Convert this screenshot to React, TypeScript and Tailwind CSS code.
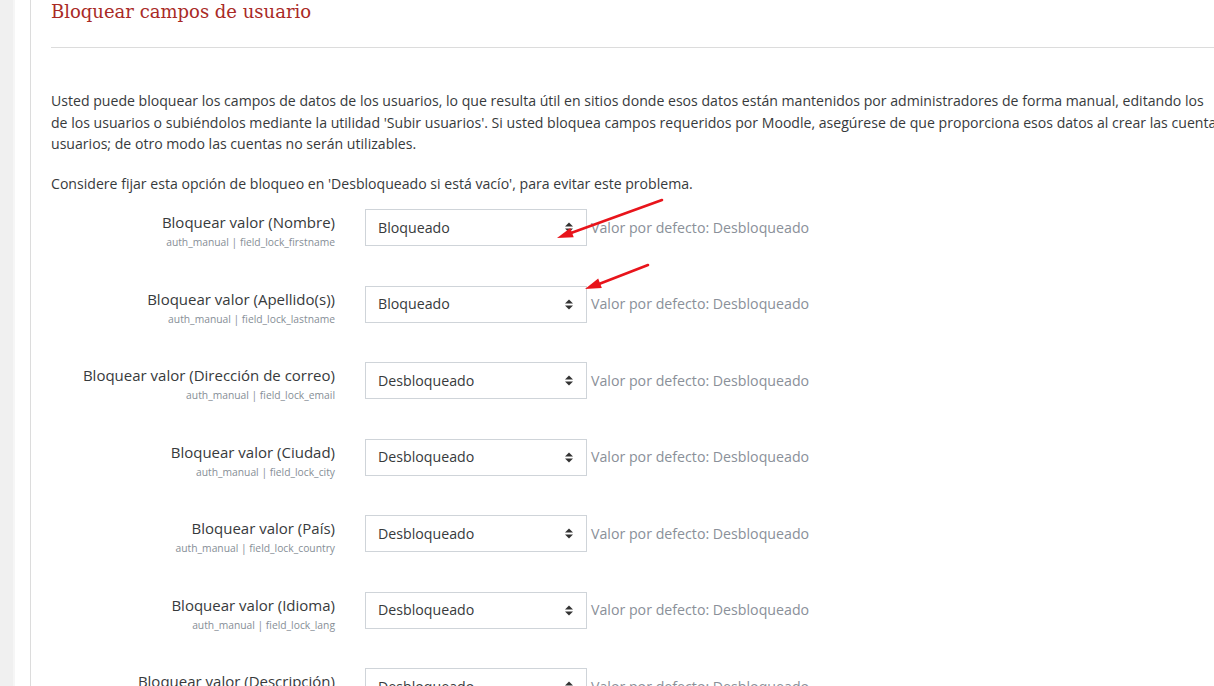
import React from "react";

const rows = [
  { label: "Bloquear valor (Nombre)", key: "auth_manual | field_lock_firstname", value: "Bloqueado" },
  { label: "Bloquear valor (Apellido(s))", key: "auth_manual | field_lock_lastname", value: "Bloqueado" },
  { label: "Bloquear valor (Dirección de correo)", key: "auth_manual | field_lock_email", value: "Desbloqueado" },
  { label: "Bloquear valor (Ciudad)", key: "auth_manual | field_lock_city", value: "Desbloqueado" },
  { label: "Bloquear valor (País)", key: "auth_manual | field_lock_country", value: "Desbloqueado" },
  { label: "Bloquear valor (Idioma)", key: "auth_manual | field_lock_lang", value: "Desbloqueado" },
  { label: "Bloquear valor (Descripción)", key: "auth_manual | field_lock_description", value: "Desbloqueado" },
];

function SelectArrows() {
  return (
    <svg width="8" height="11" viewBox="0 0 8 11" className="shrink-0">
      <path d="M0 4.5 L4 0.5 L8 4.5 Z" fill="#333" />
      <path d="M0 6.5 L4 10.5 L8 6.5 Z" fill="#333" />
    </svg>
  );
}

export default function App() {
  return (
    <div className="relative w-[1214px] h-[686px] overflow-hidden bg-white flex font-['Open_Sans',sans-serif] text-[#373a3c]">
      <div className="w-[13px] shrink-0 bg-[#f0f0f0]" />
      <div className="w-[2px] shrink-0 bg-[#f6f6f6]" />
      <div className="w-[15px] shrink-0 bg-white" />
      <div className="w-px shrink-0 bg-[#dcdcdc]" />
      <div className="flex-1 min-w-0 pl-[20px] overflow-hidden">
        <h2 className="font-['DejaVu_Serif',serif] text-[#a92a26] text-[18px] leading-[24px] whitespace-nowrap">
          Bloquear campos de usuario
        </h2>
        <div className="mt-[23px] h-px bg-[#dcdcdc]" />
        <div className="mt-[42px] text-[14.1px] leading-[21.5px] whitespace-nowrap">
          <div>Usted puede bloquear los campos de datos de los usuarios, lo que resulta útil en sitios donde esos datos están mantenidos por administradores de forma manual, editando los</div>
          <div>de los usuarios o subiéndolos mediante la utilidad 'Subir usuarios'. Si usted bloquea campos requeridos por Moodle, asegúrese de que proporciona esos datos al crear las cuentas de</div>
          <div>usuarios; de otro modo las cuentas no serán utilizables.</div>
        </div>
        <div className="mt-[18px] text-[14.1px] leading-[21.5px] whitespace-nowrap">
          Considere fijar esta opción de bloqueo en 'Desbloqueado si está vacío', para evitar este problema.
        </div>
        <div className="mt-[15px]">
          {rows.map((r) => (
            <div key={r.key} className="flex items-start h-[76.5px]">
              <div className="w-[284px] shrink-0 text-right pt-[3px]">
                <div className="text-[15px] leading-[20px] whitespace-nowrap">{r.label}</div>
                <div className="text-[10.3px] leading-[14px] mt-[3px] text-[#868e96] whitespace-nowrap">{r.key}</div>
              </div>
              <div className="flex items-center ml-[30px]">
                <div className="w-[222px] h-[37px] border border-[#cfd4d9] flex items-center justify-between pl-[12px] pr-[13px] text-[14.2px]">
                  <span>{r.value}</span>
                  <SelectArrows />
                </div>
                <div className="ml-[4px] text-[14.2px] text-[#8a9099] whitespace-nowrap">Valor por defecto: Desbloqueado</div>
              </div>
            </div>
          ))}
        </div>
      </div>
      <svg className="absolute left-0 top-0 pointer-events-none" width="1214" height="686">
        <g stroke="#e8141b" strokeWidth="2.6" strokeLinecap="round" fill="#e8141b">
          <line x1="662" y1="200" x2="571" y2="233" />
          <path d="M557 238 L573.7 237.3 L570.3 227.9 Z" stroke="none" />
          <line x1="648" y1="265" x2="599" y2="284" />
          <path d="M585 289 L601.8 288 L598.2 278.6 Z" stroke="none" />
        </g>
      </svg>
    </div>
  );
}
